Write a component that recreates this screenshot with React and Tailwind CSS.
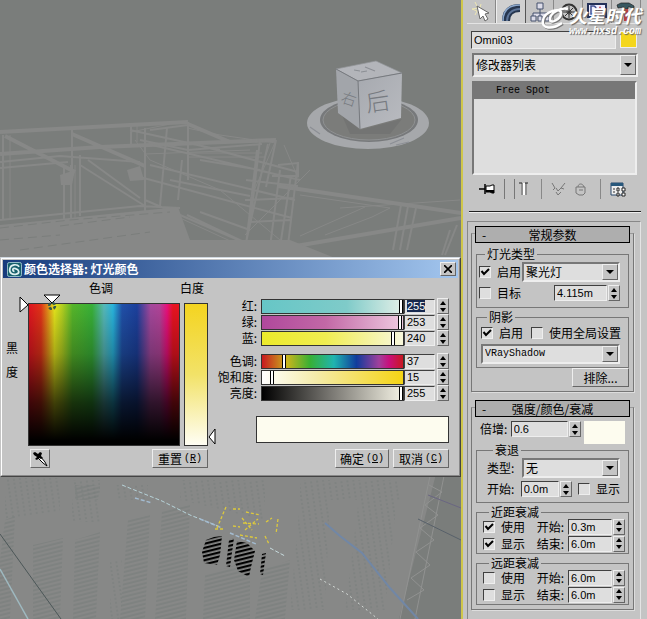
import React, { useEffect, useRef } from 'react';

const sunken = 'border border-t-[#404040] border-l-[#404040] border-b-[#eeeeee] border-r-[#eeeeee] bg-[#dedede]';
const raised = 'border border-t-[#eeeeee] border-l-[#eeeeee] border-b-[#666666] border-r-[#666666] bg-[#c4c4c4]';
const latin = "font-['Liberation_Sans','Noto_Sans_CJK_SC',sans-serif] text-[11px]";

const Spinner = ({ label }) => (
    <div className={`flex h-4 w-3 shrink-0 flex-col ${raised}`}>
        <button type="button" aria-label={`${label} +`} className="flex flex-1 items-center justify-center">
            <svg width="6" height="4" viewBox="0 0 6 4"><path d="M0 4L3 0L6 4Z" /></svg>
        </button>
        <button type="button" aria-label={`${label} -`} className="flex flex-1 items-center justify-center">
            <svg width="6" height="4" viewBox="0 0 6 4"><path d="M0 0L3 4L6 0Z" /></svg>
        </button>
    </div>
);

const NumberField = ({ id, label, value, width }) => (
    <div className="flex items-center gap-px">
        <input id={id} aria-label={label} defaultValue={value} className={`h-4 px-0.5 leading-3 outline-none ${latin} ${sunken} ${width}`} />
        <Spinner label={label} />
    </div>
);

const Check = ({ id, label, checked }) => (
    <label htmlFor={id} className="flex shrink-0 items-center gap-1.5 whitespace-nowrap">
        <span className={`relative h-3 w-3 shrink-0 ${sunken}`}>
            <input id={id} type="checkbox" defaultChecked={checked} className="peer absolute inset-0 h-full w-full appearance-none" />
            <svg className="pointer-events-none absolute inset-0 hidden peer-checked:block" width="10" height="10" viewBox="0 0 10 10" fill="none" stroke="#000" strokeWidth="2">
                <path d="M1.5 4L4 7L9 2" />
            </svg>
        </span>
        {label}
    </label>
);

const Dropdown = ({ id, label, value, className, textClass = '' }) => (
    <div className={`relative border-2 border-t-[#777777] border-l-[#777777] border-b-[#eeeeee] border-r-[#eeeeee] bg-[#dedede] ${className}`}>
        <select id={id} aria-label={label} className={`block h-full w-full appearance-none px-0.5 outline-none ${textClass}`}>
            <option>{value}</option>
        </select>
        <span className={`pointer-events-none absolute inset-y-0 right-0 flex w-4 items-center justify-center ${raised}`}>
            <svg width="8" height="4" viewBox="0 0 8 4"><path d="M0 0H8L4 4Z" /></svg>
        </span>
    </div>
);

const Button = ({ children, className = '' }) => (
    <button type="button" className={`flex h-[19px] items-center justify-center leading-4 ${raised} ${className}`}>
        {children}
    </button>
);

const Group = ({ title, children, className = '' }) => (
    <fieldset className={`min-w-0 border border-[#777777] ${className}`}>
        <legend className="ml-1.5 px-0.5 leading-3">{title}</legend>
        {children}
    </fieldset>
);

const Rollout = ({ title, children }) => (
    <section className="border border-[#777777] border-t-[#999999] shadow-[1px_1px_0_#dddddd]">
        <button type="button" className="relative -mt-2 ml-[3px] flex h-[17px] w-[calc(100%-6px)] items-center justify-center border border-black bg-[#aeaeae] leading-4">
            <span className="absolute left-1.5">-</span>
            {title}
        </button>
        {children}
    </section>
);

const Scene = () => (
    <svg className="absolute inset-0 h-full w-full" viewBox="0 0 461 619" preserveAspectRatio="xMidYMid slice">
        <defs>
            <pattern id="hatch" width="7" height="4" patternUnits="userSpaceOnUse" patternTransform="rotate(-14)">
                <path d="M0 1H7" stroke="#767b79" />
            </pattern>
            <pattern id="grain" width="6" height="4" patternUnits="userSpaceOnUse" patternTransform="rotate(-8)">
                <path d="M0 1H2" stroke="#787d7b" />
            </pattern>
            <pattern id="stripes" width="8" height="4" patternUnits="userSpaceOnUse" patternTransform="rotate(-14)">
                <path d="M0 1H8" stroke="#000" strokeWidth="2.4" />
            </pattern>
            <linearGradient id="face" x2="1" y2="1">
                <stop stopColor="#a6a9af" />
                <stop offset="1" stopColor="#b9bbc0" />
            </linearGradient>
        </defs>
        <g fill="none" stroke="#878887">
            <path strokeWidth="4" d="M0 132L130 125L188 122M0 154L100 147L276 140M5 136L75 172M72 134L145 166M188 124L230 142M278 186L461 213M290 247L461 218" />
            <path strokeWidth="2" d="M0 162L60 156L140 162M0 168L68 162M3 135V220M72 130V170M64 165V219M71 165V219M80 155V216M131 126V147M145 128V213M167 128L160 206M188 122V180M182 160L178 200M276 140L266 187M268 144L245 247M260 140L250 225M257 150L246 245M298 162L288 245M280 170L270 247M291 175L280 247M187 142L298 172M150 165L295 200M140 177L292 218M145 200L250 245M152 145L300 180M80 165L145 206M88 160L140 198M0 220L140 206L180 208M130 130L220 150M150 130L188 125M140 140L188 150L262 144M170 180L250 196M200 160L260 170M278 165L298 163V176H272M246 180L298 186M245 200L294 198M250 222L290 220M401 205L393 250M408 206L400 250M416 208L407 250M450 230L442 255M457 225L445 255M187 215L248 244M200 212L250 230" />
            <path d="M10 135V220M75 165V220M137 126V142M131 132L170 124M187 128L220 135L276 143M145 154L250 150M188 157H265M188 153H262M300 195L390 208L372 217L325 235M340 208L460 200M135 140L150 160L220 190L280 240M300 236L365 207M310 170L270 210L245 235M180 218L250 250M270 143L266 155M284 145L298 178M276 140L250 200" />
        </g>
        <path fill="#878887" d="M0 225L178 207L190 240L290 240L340 260H0ZM127 170L140 166L144 180L130 181ZM60 175L75 170L72 185H61ZM0 470H437L399 619H0Z" />
        <path stroke="#7b7e7c" strokeDasharray="9 5" fill="none" d="M0 228L70 220L170 212M0 240L60 235M20 250L150 232M60 226L130 217" />
        <path fill="url(#grain)" d="M5 478H60V512L5 520ZM72 480H100V522H72ZM115 485H148V500H115ZM180 480H265V520L180 500ZM300 480H400V500H300ZM360 490H398L385 610H345ZM300 500H330L325 610H290ZM110 560H122V619H110Z" />
        <g fill="url(#hatch)">
            <path d="M5 520L15 516L10 619H0V560ZM75 485H100L98 500H75ZM33 545L63 538L60 619H33ZM75 540L100 532L96 619H73ZM128 520L150 515L145 619H120ZM162 510L190 505L186 619H155ZM205 575L250 560V619H203ZM262 570L290 560L285 619H255Z" />
        </g>
        <g stroke="#919291" fill="none">
            <path d="M430 476L400 619M444 476L415 619M429 485L442 492L425 505L438 515L420 528L434 540L416 552L430 565L411 578L424 590L407 600" />
        </g>
        <g fill="none" strokeDasharray="4 2">
            <path stroke="#b7d3d9" d="M122 485L162 501L190 515L218 526" />
            <path stroke="#a3bbd0" d="M135 498L152 503M200 519L222 528M230 533L256 544" strokeWidth="1.5" />
            <path stroke="#c8dcdf" d="M270 548L285 556" />
            <path stroke="#d4d9d6" strokeDasharray="2 3" d="M320 579L347 594L378 619" />
        </g>
        <path d="M0 534L61 619" stroke="#4c5758" />
        <path d="M0 569L28 619" stroke="#9eb9c0" strokeWidth="1.5" />
        <path d="M325 523L340 536L362 553L390 588L418 619" stroke="#7187a6" strokeWidth="2" fill="none" />
        <path d="M428 495L461 508" stroke="#6a6682" />
        <path d="M418 519L461 540" stroke="#58616a" />
        <path d="M206 540L214 537L222 536L220 555L217 565L204 563L202 552ZM229 540L234 538L230 567L226 566ZM237 541L247 543L255 551L251 567L249 577L238 571L234 560ZM262 554L266 553L263 575L260 574Z" fill="url(#stripes)" />
        <g fill="none" stroke="#ddc93d" strokeDasharray="3 2" strokeWidth="1.3">
            <path d="M226 507L217 528M215 529H225M233 509H240M246 512L260 515M243 523L259 524M242 518L252 530M245 530L258 519M240 535L257 538M266 522L272 518M278 519L276 534M265 536L269 544M233 526L240 527" />
        </g>
        {/* view cube */}
        <ellipse cx="368" cy="123" rx="61" ry="26" fill="#a6a8ab" />
        <ellipse cx="369" cy="120" rx="49" ry="22" fill="#77797b" />
        <ellipse cx="369" cy="120" rx="46" ry="20" fill="#7b7c7a" stroke="#8f9192" />
        <path d="M341 113L360 130L402 119L390 134L350 134Z" fill="#686969" opacity=".4" />
        <path d="M336 69L376 61L402 73L358 81Z" fill="#b3b5ba" stroke="#92959a" strokeWidth=".7" />
        <path d="M336 69L358 81L360 129L338 113Z" fill="#a2a5aa" />
        <path d="M358 81L402 73L401 118L360 129Z" fill="url(#face)" />
        <path d="M336 69L358 81L402 73M358 81L360 129" stroke="#777a7f" fill="none" />
        <g fill="#777b81" fontFamily="'Noto Sans CJK SC', sans-serif" fontWeight="300">
            <text x="367" y="112" fontSize="24" transform="rotate(-8 367 112)">后</text>
            <text x="340" y="102" fontSize="15" transform="rotate(18 340 102)">右</text>
        </g>
        <path d="M354 70L360 71M365 67L375 71M361 72L367 71M310 127L320 134M390 144L404 138M396 145L409 142" stroke="#8c8f95" strokeWidth="1.2" />
    </svg>
);

const channels = [
    [
        { id: 'red', label: '红', value: 255, track: 'bg-[linear-gradient(to_right,#66c6c6,#7fcbc9_60%,#e3efe7)]' },
        { id: 'green', label: '绿', value: 253, track: 'bg-[linear-gradient(to_right,#b0489c,#c268a6_45%,#efcbe0)]' },
        { id: 'blue', label: '蓝', value: 240, track: 'bg-[linear-gradient(to_right,#ecea2b,#f0ed51_45%,#f8f7dc)]' },
    ],
    [
        { id: 'hue', label: '色调', value: 37, track: 'bg-[linear-gradient(to_right,#c81820,#c8b41c_18%,#38b034_34%,#20b4b0_51%,#103c9c_67%,#a0409c_83%,#c8107c_90%,#c81820)]' },
        { id: 'sat', label: '饱和度', value: 15, track: 'bg-[linear-gradient(to_right,#ffffff,#f4ebaa_38%,#f4d414)]' },
        { id: 'val', label: '亮度', value: 255, track: 'bg-[linear-gradient(to_right,#000000,#777570_48%,#f4f2e4)]' },
    ],
];

const Channel = ({ id, label, value, track, inputRef }) => (
    <div className="flex h-4 items-center">
        <label htmlFor={id} className="w-[53px] pr-1 text-right leading-4">{label}:</label>
        <input
            id={id}
            type="range"
            min="0"
            max="255"
            defaultValue={value}
            className={`h-[15px] min-w-0 flex-1 appearance-none border border-[#333333] ${track} [&::-webkit-slider-thumb]:h-[13px] [&::-webkit-slider-thumb]:w-1 [&::-webkit-slider-thumb]:appearance-none [&::-webkit-slider-thumb]:border-x [&::-webkit-slider-thumb]:border-black [&::-webkit-slider-thumb]:bg-white`}
        />
        <input
            ref={inputRef}
            aria-label={label}
            defaultValue={value}
            className={`mr-0.5 h-[15px] w-[31px] px-0.5 leading-3 outline-none selection:bg-[#17294f] selection:text-white ${latin} ${sunken}`}
        />
        <Spinner label={label} />
    </div>
);

const Hotkey = ({ letter }) => (
    <span className="ml-0.5 font-['Liberation_Mono',monospace] text-[10px]">(<u>{letter}</u>)</span>
);

const ColorDialog = () => {
    const redRef = useRef(null);

    useEffect(() => {
        redRef.current.focus();
        redRef.current.select();
    }, []);

    return (
        <div className="absolute inset-x-0 top-[257px] border border-t-[#d0d8e0] border-l-[#c4c4c4] border-r-[#444444] border-b-[#444444] bg-[#c4c4c4]">
            <div className="border border-t-white border-l-white border-r-[#888888] border-b-[#888888] p-px">
                <div className="flex h-[18px] items-center gap-0.5 bg-linear-to-r from-[#173b7c] to-[#a3c6ee] px-1 font-bold text-white">
                    <svg width="15" height="15" viewBox="0 0 16 16" fill="none">
                        <rect x=".5" y=".5" width="15" height="15" rx="2" fill="#16606c" stroke="#9fc8cf" />
                        <path d="M13 5C11 2 4 2 3 7S6 14 10 13S13 8 9 7S6 10 8 10" stroke="#dff0f0" strokeWidth="1.8" />
                    </svg>
                    <h1 className="flex-1 leading-4">颜色选择器: 灯光颜色</h1>
                    <button type="button" aria-label="关闭" className={`-mr-0.5 flex h-[14px] w-4 items-center justify-center ${raised}`}>
                        <svg width="8" height="8" viewBox="0 0 8 8" stroke="#000" strokeWidth="1.6"><path d="M0 0L8 8M8 0L0 8" /></svg>
                    </button>
                </div>
                <div className="flex pr-[9px] pb-1.5 pl-[3px]">
                    <div className="flex w-[22px] flex-col gap-2 pt-[62px] leading-4">
                        <span>黑</span>
                        <span>度</span>
                    </div>
                    <div className="w-[180px]">
                        <div className="flex h-[25px] gap-1 pt-0.5 text-center leading-4">
                            <span className="w-[146px]">色调</span>
                            <span className="w-7">白度</span>
                        </div>
                        <div className="flex gap-1">
                            <div className="relative h-[143px] w-[152px] border border-[#333333] bg-[linear-gradient(to_bottom,transparent,rgb(0_0_0/.25)_35%,rgb(0_0_0/.72)_70%,#000000_97%),linear-gradient(to_right,#e01420,#e03418_8%,#e4e41c_17%,#b4d020_22%,#56b52a_29%,#38b038_42%,#56b8b8_50%,#28b4dc_56%,#2050a8_62%,#1c409c_72%,#a4489c_81%,#b04498_87%,#e8107c_92%,#e81420_96%)]">
                                <svg className="absolute -top-2 -left-2.5" width="10" height="17" viewBox="0 0 10 17" fill="#fff" stroke="#000"><path d="M1 1L9 9L1 16Z" /></svg>
                                <svg className="absolute -top-2.5 left-3.5" width="18" height="16" viewBox="0 0 18 16">
                                    <path d="M1 1H17L9 9Z" fill="#fff" stroke="#000" />
                                    <circle cx="9" cy="12" r="3" fill="none" stroke="#31584c" strokeWidth="2.5" strokeDasharray="3 1.7" />
                                </svg>
                            </div>
                            <div className="relative h-[143px] w-6 border border-[#333333] bg-[linear-gradient(to_bottom,#f4d420,#f2e268_50%,#fffef4)]">
                                <svg className="absolute -right-[9px] bottom-0" width="8" height="17" viewBox="0 0 8 17" fill="#fff" stroke="#000"><path d="M7 1V16L1 9Z" /></svg>
                            </div>
                        </div>
                        <div className="mt-[3px] flex justify-between">
                            <Button className="ml-0.5 w-5">
                                <svg className="shrink-0" width="16" height="16" viewBox="0 0 16 16">
                                    <path d="M6 7L8 5L13 11L15 15L11 12Z" fill="#fff" stroke="#000" />
                                    <path d="M1 2L3 1L6 3L8 1L10 2L9 5L11 7L9 8L7 7L5 9L3 8L5 6L2 4Z" />
                                </svg>
                            </Button>
                            <Button className="w-14">重置<Hotkey letter="R" /></Button>
                        </div>
                    </div>
                    <div className="flex min-w-0 flex-1 flex-col pt-5">
                        <div className="flex flex-col gap-[7px]">
                            {channels.map((rows, i) => (
                                <div key={i}>
                                    {rows.map((row) => (
                                        <Channel key={row.id} {...row} inputRef={row.id === 'red' ? redRef : null} />
                                    ))}
                                </div>
                            ))}
                        </div>
                        <div className="mt-[15px] ml-12 h-[27px] border border-[#333333] bg-[#fdfcef]" />
                        <div className="mt-auto flex justify-end gap-1">
                            <Button className="w-[54px]">确定<Hotkey letter="O" /></Button>
                            <Button className="w-14">取消<Hotkey letter="C" /></Button>
                        </div>
                    </div>
                </div>
            </div>
        </div>
    );
};

const tabs = [
    { name: 'Create', icon: <g><path d="M4 1L7 7L1 8L6 10L4 14M10 3L9 7" stroke="#eee7b4" fill="none" /><path d="M6 5L18 12L14 13L17 18L14 20L12 15L9 18Z" fill="#fff" stroke="#666" /></g> },
    { name: 'Modify', active: true, icon: <g fill="none"><path d="M5 20C5 11 10 7 19 7" stroke="#26364f" strokeWidth="8" /><path d="M2 20C2 9 8 4 19 4" stroke="#8ca8cc" strokeWidth="1.5" /><path d="M6 20C6 13 11 8 19 8" stroke="#5c7498" strokeWidth="2" /></g> },
    { name: 'Hierarchy', icon: <g fill="#dcdce8" stroke="#44506c"><path d="M10 8V12M3 15V12H17V15M10 12V15" /><path d="M7 2H13V8H7ZM1 15H6V20H1ZM8 15H12V20H8ZM15 15H19V20H15Z" /></g> },
    { name: 'Motion', icon: <g fill="none" stroke="#333"><circle cx="11" cy="11" r="7.5" strokeWidth="2" /><circle cx="11" cy="11" r="2" fill="#eee" /><path d="M11 5V17M5 11H17M7 7L15 15M15 7L7 15" /></g> },
    { name: 'Display', icon: <g><path d="M1 3H19V16H1Z" fill="#eef" stroke="#223058" strokeWidth="2" /><path d="M4 5H7C10 6 10 12 7 13H4Z" fill="none" stroke="#405090" strokeWidth="1.5" /><path d="M13 5L17 13H9Z" fill="#c83038" /></g> },
    { name: 'Utilities', icon: <g><path d="M1 4L5 2H13L18 5V8L14 6H12V8H8V6L2 7Z" fill="#385860" stroke="#222" strokeWidth=".7" /><path d="M8 8H12L13 20H8Z" fill="#b84040" /></g> },
];

const CommandPanel = () => (
    <aside className="flex w-[184px] shrink-0 flex-col bg-[#c4c4c4] pr-1.5 pl-1">
        <nav className="relative flex h-6 border-b border-[#e4e4e4]">
            {tabs.map((tab) => (
                <button key={tab.name} type="button" aria-label={tab.name} className={`flex flex-1 items-center justify-center border-r ${tab.active ? 'border-l border-l-[#eeeeee] border-r-[#555555] bg-[#d0d0d0]' : 'border-[#888888]'}`}>
                    <svg width="20" height="22" viewBox="0 0 20 22">{tab.icon}</svg>
                </button>
            ))}
            <div className="pointer-events-none absolute top-1 right-0 flex items-start text-white italic">
                <svg width="28" height="26" viewBox="0 0 28 26" fill="none" stroke="#fff" strokeWidth="2.5" className="drop-shadow-[1px_1px_0_#777777]">
                    <path d="M27 5C20 3 9 9 9 15S20 15 20 9S4 7 2 16S11 26 21 19" />
                </svg>
                <div className="text-center font-bold [text-shadow:1px_1px_1px_#666666]">
                    <div className="text-[18px] leading-[22px]">火星时代</div>
                    <div className="font-['Liberation_Mono',monospace] text-[10px] leading-3">www.hxsd.com</div>
                </div>
            </div>
        </nav>
        <div className="mt-[7px] mr-1 ml-1 flex gap-1">
            <input aria-label="名称" defaultValue="Omni03" className={`h-[18px] min-w-0 flex-1 px-0.5 outline-none ${latin} ${sunken}`} />
            <button type="button" aria-label="颜色" className="h-[17px] w-[17px] border border-[#eeeeee] bg-[#f4d61c]" />
        </div>
        <Dropdown label="修改器列表" value="修改器列表" className="mt-1 mr-[3px] ml-[5px] h-6" />
        <ul className="mt-1 mr-1 ml-[5px] h-[94px] border-2 border-t-[#777777] border-l-[#777777] border-b-[#eeeeee] border-r-[#eeeeee] bg-[#dedede] font-['Liberation_Mono',monospace] text-[10px]">
            <li className="h-4 bg-[#777777] pl-[22px] leading-4">Free Spot</li>
        </ul>
        <div className="flex h-7 items-center gap-[9px] pl-3">
            <button type="button" aria-label="Pin">
                <svg width="16" height="14" viewBox="0 0 16 14"><path d="M0 7H6M6 2V12" stroke="#000" strokeWidth="1.5" /><path d="M7 4H11L13 3H15V11H13L11 10H7Z" fill="#fff" stroke="#000" /><path d="M7 8H15V11H13L11 10H7Z" /></svg>
            </button>
            <span className="h-5 w-px bg-[#777777]" />
            <button type="button" aria-label="Show" className="flex h-5 items-center border-l border-[#777777] px-1">
                <svg width="9" height="14" viewBox="0 0 9 14"><path d="M2 1H8V13H2Z" fill="#fff" /><path d="M0 1H3V13M6 1H9M7 1V13" stroke="#222" fill="none" /></svg>
            </button>
            <span className="h-5 w-px bg-[#888888]" />
            <button type="button" aria-label="Unique">
                <svg width="15" height="14" viewBox="0 0 15 14" fill="none" stroke="#777"><path d="M1 1L4 6L2 8M14 1L10 6L13 7M5 6L7 9L10 6M5 10L7 13L10 10" /></svg>
            </button>
            <button type="button" aria-label="Remove">
                <svg width="12" height="14" viewBox="0 0 12 14" fill="none" stroke="#777"><path d="M1 5H10V11L8 13H4L1 11ZM3 5C3 1 8 1 9 5M4 8H8" /></svg>
            </button>
            <span className="ml-1 h-5 w-px bg-[#888888]" />
            <button type="button" aria-label="Configure">
                <svg width="16" height="15" viewBox="0 0 16 15"><path d="M1 1H13V13H1Z" fill="#eee" stroke="#28486c" /><path d="M1 1H13V4H1Z" fill="#28587c" /><path d="M3 7H5M3 10H5" stroke="#333" /><path d="M7 6H9V9H7ZM12 6H15V9H12ZM7 11H9V14H7ZM12 11H15V14H12Z" fill="#fff" stroke="#222" /></svg>
            </button>
        </div>
        <div className="mt-2 ml-0.5 h-0.5 border-b border-[#eeeeee] bg-[#222222]" />
        <div className="mt-2 flex flex-1 flex-col border-t border-l border-[#888888] border-r border-r-[#e4e4e4] pt-[11px] pr-1.5 pl-[3px]">
            <Rollout title="常规参数">
                <div className="px-1 pt-[5px] pb-1">
                    <Group title="灯光类型" className="h-[60px] pr-2 pl-0.5">
                        <div className="flex items-center justify-between pt-0.5">
                            <Check id="light-on" label="启用" checked />
                            <Dropdown label="灯光类型" value="聚光灯" className="h-5 w-[98px]" />
                        </div>
                        <div className="flex items-center justify-between pt-[3px]">
                            <Check id="target" label="目标" />
                            <NumberField id="distance" label="目标距离" value="4.115m" width="w-[53px]" />
                        </div>
                    </Group>
                    <Group title="阴影" className="mt-[3px] h-[57px] pr-2 pl-1">
                        <div className="flex items-center gap-2 pt-0.5 leading-4">
                            <Check id="shadow-on" label="启用" checked />
                            <Check id="global" label="使用全局设置" />
                        </div>
                        <Dropdown label="阴影类型" value="VRayShadow" className="mt-[3px] h-5" textClass="font-['Liberation_Mono',monospace] text-[10px]" />
                    </Group>
                    <Button className="ml-auto w-[57px]">排除...</Button>
                </div>
            </Rollout>
            <div className="h-[15px] shrink-0" />
            <Rollout title="强度/颜色/衰减">
                <div className="px-1 pt-1 pb-1">
                    <div className="flex items-start justify-between pr-1 pl-1">
                        <label htmlFor="multiplier" className="leading-4">倍增:</label>
                        <NumberField id="multiplier" label="倍增" value="0.6" width="w-[57px]" />
                        <button type="button" aria-label="灯光颜色" className="h-[23px] w-[41px] bg-[#fdfcef]" />
                    </div>
                    <Group title="衰退" className="h-[59px] pr-2 pl-2.5">
                        <div className="flex items-center justify-between pt-0.5">
                            <label htmlFor="decay-type">类型:</label>
                            <Dropdown id="decay-type" label="类型" value="无" className="h-5 w-[98px]" />
                        </div>
                        <div className="flex items-center justify-between pt-[3px]">
                            <label htmlFor="decay-start">开始:</label>
                            <NumberField id="decay-start" label="开始" value="0.0m" width="w-[38px]" />
                            <Check id="decay-show" label="显示" />
                        </div>
                    </Group>
                    {[
                        { key: 'near', title: '近距衰减', on: true, start: '0.3m', end: '6.0m' },
                        { key: 'far', title: '远距衰减', on: false, start: '6.0m', end: '6.0m' },
                    ].map((g) => (
                        <Group key={g.key} title={g.title} className="mt-[3px] pr-[3px] pb-px pl-1.5">
                            <div className="flex h-[17px] items-center justify-between">
                                <Check id={`${g.key}-use`} label="使用" checked={g.on} />
                                <label htmlFor={`${g.key}-start`} className="ml-2">开始:</label>
                                <NumberField id={`${g.key}-start`} label="开始" value={g.start} width="w-[44px]" />
                            </div>
                            <div className="flex h-[17px] items-center justify-between">
                                <Check id={`${g.key}-show`} label="显示" checked={g.on} />
                                <label htmlFor={`${g.key}-end`} className="ml-2">结束:</label>
                                <NumberField id={`${g.key}-end`} label="结束" value={g.end} width="w-[44px]" />
                            </div>
                        </Group>
                    ))}
                </div>
            </Rollout>
            <div className="h-1.5 shrink-0" />
        </div>
    </aside>
);

const App = () => (
    <div className="flex min-h-screen bg-[#c4c4c4] font-['Noto_Sans_CJK_SC',sans-serif] text-[12px] leading-4 text-black">
        <main className="relative min-w-0 flex-1 overflow-hidden border-r-2 border-[#cfc64a] bg-[#7a7d7b]">
            <Scene />
            <ColorDialog />
        </main>
        <CommandPanel />
    </div>
);

export default App;
